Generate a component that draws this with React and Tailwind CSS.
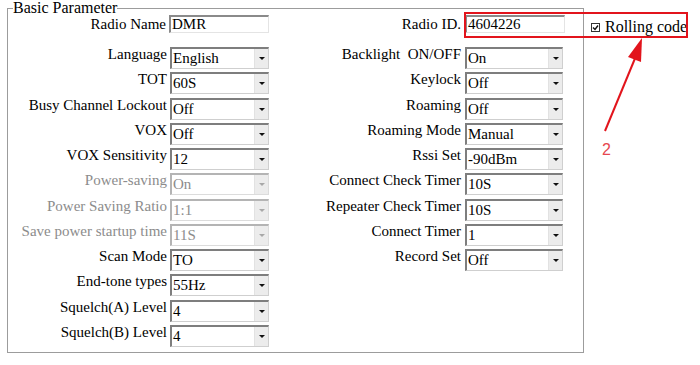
import React from 'react';

const leftRows = [
  { label: 'Language', value: 'English' },
  { label: 'TOT', value: '60S' },
  { label: 'Busy Channel Lockout', value: 'Off' },
  { label: 'VOX', value: 'Off' },
  { label: 'VOX Sensitivity', value: '12' },
  { label: 'Power-saving', value: 'On', disabled: true },
  { label: 'Power Saving Ratio', value: '1:1', disabled: true },
  { label: 'Save power startup time', value: '11S', disabled: true },
  { label: 'Scan Mode', value: 'TO' },
  { label: 'End-tone types', value: '55Hz' },
  { label: 'Squelch(A) Level', value: '4' },
  { label: 'Squelch(B) Level', value: '4' },
];

const rightRows = [
  { label: 'Backlight  ON/OFF', value: 'On' },
  { label: 'Keylock', value: 'Off' },
  { label: 'Roaming', value: 'Off' },
  { label: 'Roaming Mode', value: 'Manual' },
  { label: 'Rssi Set', value: '-90dBm' },
  { label: 'Connect Check Timer', value: '10S' },
  { label: 'Repeater Check Timer', value: '10S' },
  { label: 'Connect Timer', value: '1' },
  { label: 'Record Set', value: 'Off' },
];

function Select({ value, disabled, wide }) {
  return (
    <div
      className={
        'flex h-[22px] border-t-2 border-l-2 border-b border-r ' +
        (wide ? 'w-[99px] ' : 'w-[98px] ') +
        (disabled
          ? 'border-t-[#b4b4b4] border-l-[#b4b4b4] border-b-[#dcdcdc] border-r-[#dcdcdc] text-[#8c8c8c]'
          : 'border-t-[#7e7e7e] border-l-[#7e7e7e] border-b-[#cfcfcf] border-r-[#cfcfcf] text-black')
      }
    >
      <span className="flex-1 pl-[1px] leading-[18px] whitespace-nowrap overflow-hidden">{value}</span>
      <span className="flex w-[14px] items-center justify-center bg-[#ececec] border-l border-[#e2e2e2]">
        <span
          className={
            'w-0 h-0 border-l-[3px] border-r-[3px] border-t-[3px] border-l-transparent border-r-transparent ' +
            (disabled ? 'border-t-[#a8a8a8]' : 'border-t-[#111]')
          }
        />
      </span>
    </div>
  );
}

function TextBox({ value }) {
  return (
    <div className="h-[18px] w-[100px] border-t-2 border-l-2 border-t-[#8a8a8a] border-l-[#8a8a8a] border-b border-r border-b-[#e4e4e4] border-r-[#e4e4e4] pl-[1px] leading-[15px] text-black">
      {value}
    </div>
  );
}

function Row({ label, value, disabled, labelW, gap, wide }) {
  return (
    <div className="flex h-[25.25px] items-start">
      <div
        className={
          'text-right leading-[14px] whitespace-pre ' + labelW + ' ' + (disabled ? 'text-[#8c8c8c]' : 'text-black')
        }
      >
        {label}
      </div>
      <div className={gap}>
        <Select value={value} disabled={disabled} wide={wide} />
      </div>
    </div>
  );
}

export default function App() {
  return (
    <div
      className="relative w-[700px] h-[365px] bg-white text-[15px] flex items-start"
      style={{ fontFamily: '"Liberation Serif", "Times New Roman", serif' }}
    >
      <fieldset className="ml-[7px] w-[577px] h-[353px] border border-[#9c9c9c] p-0 m-0">
        <legend className="ml-[5px] text-[16px] leading-[16px] text-black">Basic Parameter</legend>
        <div className="flex -mt-[1px]">
          <div className="w-[261px]">
            <div className="flex items-start h-[32px]">
              <div className="w-[159px] text-right leading-[14px] pt-[2px] text-black">Radio Name</div>
              <div className="ml-[3px]">
                <TextBox value="DMR" />
              </div>
            </div>
            {leftRows.map((r) => (
              <Row key={r.label} {...r} labelW="w-[159px]" gap="ml-[3px]" wide />
            ))}
          </div>
          <div>
            <div className="flex items-start h-[32px]">
              <div className="w-[192px] text-right leading-[14px] pt-[2px] text-black">Radio ID.</div>
              <div className="ml-[4px]">
                <TextBox value="4604226" />
              </div>
            </div>
            {rightRows.map((r) => (
              <Row key={r.label} {...r} labelW="w-[192px]" gap="ml-[4px]" />
            ))}
          </div>
        </div>
      </fieldset>

      <div className="ml-[7px] mt-[19px] flex items-center text-[16px] leading-[16px] text-black">
        <span className="flex h-[9px] w-[9px] items-center justify-center border border-[#333] bg-white">
          <svg width="7" height="7" viewBox="0 0 7 7">
            <path d="M1 3.5 L3 5.5 L6 1.5" fill="none" stroke="#111" strokeWidth="1.4" />
          </svg>
        </span>
        <span className="ml-[5px]">Rolling code</span>
      </div>

      <div className="absolute left-[464px] top-[12px] w-[224px] h-[26px] border-2 border-[#e2141c] pointer-events-none" />

      <svg className="absolute left-0 top-0 pointer-events-none" width="700" height="365">
        <line x1="605" y1="131" x2="636" y2="56" stroke="#e2141c" strokeWidth="2" />
        <polygon points="642,38 628,57 641,62" fill="#e2141c" />
      </svg>
      <div
        className="absolute left-[602px] top-[141px] text-[16px] leading-[18px] text-[#e6464f]"
        style={{ fontFamily: '"Liberation Sans", Arial, sans-serif' }}
      >
        2
      </div>
    </div>
  );
}
